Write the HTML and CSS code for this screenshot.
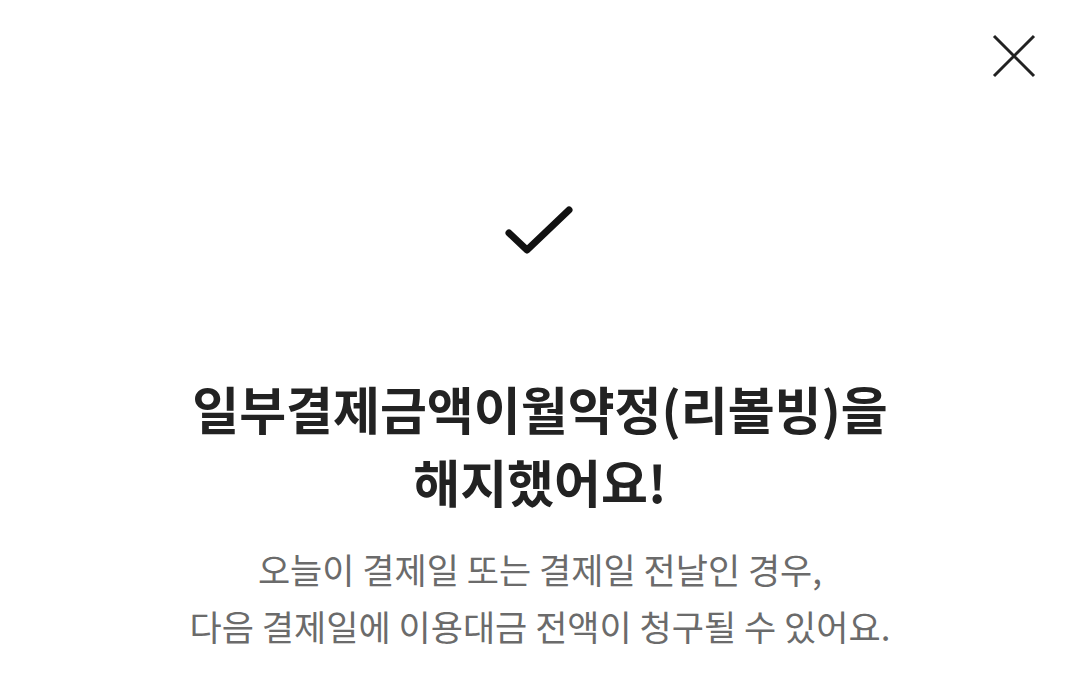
FILE: index.html
```html
<html>
	<head>
		<title>리볼빙 해지 완료</title>
		<link rel="stylesheet" href="styles.css">
	</head>
	<body>
		<div class="Page">
			<div class="TopBar">
				<button class="CloseButton" aria-label="닫기">
					<svg width="44" height="44" viewBox="0 0 44 44">
						<path d="M2 2 L42 42 M42 2 L2 42" stroke="#222" stroke-width="3" fill="none"/>
					</svg>
				</button>
			</div>
			<div class="Content">
				<div class="CheckIcon">
					<svg width="72" height="54" viewBox="0 0 72 54">
						<path d="M5 29 L23 46 L65 6" stroke="#111" stroke-width="7" stroke-linecap="round" stroke-linejoin="round" fill="none"/>
					</svg>
				</div>
				<h1 class="Title">일부결제금액이월약정(리볼빙)을<br>해지했어요!</h1>
				<p class="Description">오늘이 결제일 또는 결제일 전날인 경우,<br>다음 결제일에 이용대금 전액이 청구될 수 있어요.</p>
			</div>
		</div>
	</body>
</html>
```

FILE: styles.css
```css
/* base */
body {
	margin: 0;
	background-color: #ffffff;
	font-family: "Noto Sans CJK KR", "Noto Sans", sans-serif;
}

.Page {
	width: 1080px;
	height: 682px;
	display: flex;
	flex-direction: column;
}

/* top bar with close button */
.TopBar {
	display: flex;
	justify-content: flex-end;
	padding: 34px 44px 0 0;
}

.CloseButton {
	border: none;
	background: none;
	padding: 0;
	width: 44px;
	height: 44px;
}

/* main message */
.Content {
	display: flex;
	flex-direction: column;
	align-items: center;
	text-align: center;
}

.CheckIcon {
	margin-top: 126px;
	height: 54px;
}

.Title {
	margin: 114px 0 0 0;
	font-size: 51px;
	font-weight: 700;
	line-height: 73px;
	color: #222222;
}

.Description {
	margin: 22px 0 0 0;
	font-size: 35px;
	font-weight: 400;
	line-height: 57px;
	color: #6b6b6b;
}
```
